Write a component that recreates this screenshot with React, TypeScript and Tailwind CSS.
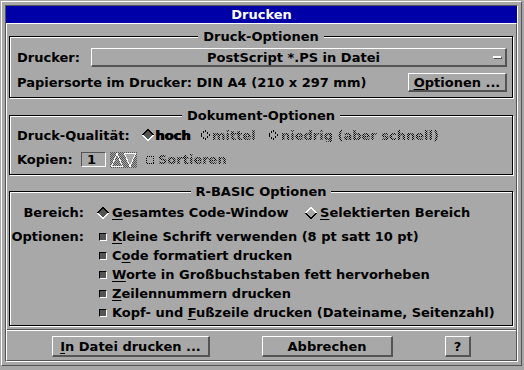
import React from "react";

const DIS =
  "bg-clip-text text-transparent bg-[image:repeating-conic-gradient(#000_0%_25%,transparent_0%_50%)] bg-[length:2px_2px]";

function U({ children }: { children: React.ReactNode }) {
  return <span className="underline decoration-1 underline-offset-[2px]">{children}</span>;
}

function Diamond({ kind }: { kind: "on" | "off" | "dis" }) {
  return (
    <svg width="12" height="12" viewBox="0 0 12 12" shapeRendering="crispEdges" className="shrink-0">
      {kind === "on" && (
        <>
          <polygon points="6,0.5 11.5,6 6,11.5 0.5,6" fill="#545454" />
          <polyline points="0.5,6 6,0.5 11.5,6" fill="none" stroke="#000" />
          <polyline points="0.5,6 6,11.5 11.5,6" fill="none" stroke="#fff" />
        </>
      )}
      {kind === "off" && (
        <>
          <polyline points="0.5,6 6,0.5 11.5,6" fill="none" stroke="#fff" />
          <polyline points="0.5,6 6,11.5 11.5,6" fill="none" stroke="#000" />
        </>
      )}
      {kind === "dis" && (
        <polygon
          points="6,1.5 10.5,6 6,10.5 1.5,6"
          fill="none"
          stroke="#000"
          strokeDasharray="1.4 1.4"
        />
      )}
    </svg>
  );
}

function Check() {
  return (
    <div className="w-[12px] h-[12px] flex items-center justify-center shrink-0">
      <div className="w-[8px] h-[8px] bg-[#545454] border-t border-l border-t-black border-l-black border-b border-r border-b-white border-r-white" />
    </div>
  );
}

function Group({
  title,
  className,
  children,
}: {
  title: string;
  className: string;
  children: React.ReactNode;
}) {
  return (
    <div
      className={
        "relative ml-[2px] mr-[3px] border border-black shadow-[inset_1px_1px_0_#fff,1px_1px_0_#fff] " +
        className
      }
    >
      <div className="absolute left-0 right-0 -top-[8px] flex justify-center">
        <span className="bg-[#a8a8a8] px-[5px] leading-[15px]">{title}</span>
      </div>
      {children}
    </div>
  );
}

const BTN =
  "h-[19px] border-t border-l border-t-white border-l-white border-r-2 border-b-2 border-r-[#545454] border-b-[#545454] flex items-center justify-center";

function OptRow({ label, children }: { label?: string; children: React.ReactNode }) {
  return (
    <div className="h-[19px] flex items-center">
      <div className="w-[74px] text-right">{label}</div>
      <div className="ml-[13px] flex items-center">
        <Check />
        <span className="ml-[3px]">{children}</span>
      </div>
    </div>
  );
}

export default function App() {
  return (
    <div className="w-[524px] h-[370px] bg-[#a8a8a8] pl-[1px] pt-[1px] pr-[2px] pb-[4px] font-['DejaVu_Sans',sans-serif] font-bold text-[13px] leading-none text-black">
      <div className="h-full border border-t-white border-l-white border-r-[#545454] border-b-[#545454] p-[3px]">
        <div className="h-full flex flex-col border border-t-[#545454] border-l-[#545454] border-r-white border-b-white">
          <div className="h-[17px] shrink-0 bg-[#0000a8] text-white flex items-center justify-center">
            Drucken
          </div>
          <div className="flex-1 flex flex-col border border-t-white border-l-white border-r-[#545454] border-b-[#545454] pt-[12px]">
            {/* Druck-Optionen */}
            <Group title="Druck-Optionen" className="h-[62px] pt-[11px] pl-[7px] pr-[5px]">
              <div className="h-[19px] flex items-center">
                <div className="w-[74px]">Drucker:</div>
                <div className="flex-1 h-[19px] border-t border-l border-t-white border-l-white border-r-2 border-b-2 border-r-[#545454] border-b-[#545454] flex items-center">
                  <div className="flex-1 text-center pl-[2px]">PostScript *.PS in Datei</div>
                  <div className="w-[8px] h-[2px] bg-white shadow-[1px_1px_0_#545454] mr-[4px] mb-[1px]" />
                </div>
              </div>
              <div className="mt-[6px] h-[19px] flex items-center">
                <div>Papiersorte im Drucker: DIN A4 (210 x 297 mm)</div>
                <div className="flex-1" />
                <div className={BTN + " w-[99px]"}>
                  <span>
                    <U>O</U>ptionen ...
                  </span>
                </div>
              </div>
            </Group>

            {/* Dokument-Optionen */}
            <Group title="Dokument-Optionen" className="mt-[17px] h-[60px] pt-[10px] pl-[7px]">
              <div className="h-[18px] flex items-center">
                <div className="w-[125px]">Druck-Qualität:</div>
                <div className="w-[57px] flex items-center">
                  <Diamond kind="on" />
                  <span className="ml-[1px] [text-shadow:1px_0_0_#000]">hoch</span>
                </div>
                <div className="w-[68px] flex items-center">
                  <Diamond kind="dis" />
                  <span className={"ml-[1px] " + DIS}>mittel</span>
                </div>
                <div className="flex items-center">
                  <Diamond kind="dis" />
                  <span className={"ml-[2px] " + DIS}>niedrig (aber schnell)</span>
                </div>
              </div>
              <div className="mt-[7px] h-[17px] flex items-center">
                <div className="w-[64px]">Kopien:</div>
                <div className="w-[25px] h-[15px] border border-t-[#545454] border-l-[#545454] border-r-white border-b-white pl-[5px] flex items-center">
                  1
                </div>
                <svg
                  width="27"
                  height="16"
                  viewBox="0 0 27 16"
                  shapeRendering="crispEdges"
                  className="ml-[4px]"
                >
                  <defs>
                    <pattern id="ck" width="2" height="2" patternUnits="userSpaceOnUse">
                      <rect width="2" height="2" fill="#a8a8a8" />
                      <rect width="1" height="1" fill="#545454" />
                      <rect x="1" y="1" width="1" height="1" fill="#545454" />
                    </pattern>
                  </defs>
                  <rect width="27" height="16" fill="url(#ck)" />
                  <polygon points="1.5,14.5 7,1.5 12.5,14.5" fill="none" stroke="#fff" />
                  <polygon points="14.5,1.5 25.5,1.5 20,14.5" fill="#a8a8a8" stroke="#fff" />
                </svg>
                <svg width="8" height="8" viewBox="0 0 8 8" shapeRendering="crispEdges" className="ml-[9px]">
                  <rect x="0.5" y="0.5" width="7" height="7" fill="none" stroke="#000" strokeDasharray="1 1" />
                </svg>
                <span className={"ml-[4px] " + DIS}>Sortieren</span>
              </div>
            </Group>

            {/* R-BASIC Optionen */}
            <Group title="R-BASIC Optionen" className="mt-[16px] h-[135px] pt-[11px]">
              <div className="h-[19px] flex items-center">
                <div className="w-[74px] text-right">Bereich:</div>
                <div className="ml-[13px] w-[208px] flex items-center">
                  <Diamond kind="on" />
                  <span className="ml-[3px]">
                    <U>G</U>esamtes Code-Window
                  </span>
                </div>
                <div className="flex items-center">
                  <Diamond kind="off" />
                  <span className="ml-[3px]">
                    <U>S</U>elektierten Bereich
                  </span>
                </div>
              </div>
              <div className="mt-[5px]">
                <OptRow label="Optionen:">
                  <U>K</U>leine Schrift verwenden (8 pt satt 10 pt)
                </OptRow>
                <OptRow>
                  C<U>o</U>de formatiert drucken
                </OptRow>
                <OptRow>
                  <U>W</U>orte in Großbuchstaben fett hervorheben
                </OptRow>
                <OptRow>
                  <U>Z</U>eilennummern drucken
                </OptRow>
                <OptRow>
                  Kopf- und <U>F</U>ußzeile drucken (Dateiname, Seitenzahl)
                </OptRow>
              </div>
            </Group>

            <div className="mt-[3px] h-[2px] border-t border-t-[#545454] border-b border-b-white" />

            <div className="mt-[5px] h-[21px] flex pl-[45px] gap-[52px]">
              <div className={BTN + " h-[21px] w-[158px]"}>
                <span>
                  <U>I</U>n Datei drucken ...
                </span>
              </div>
              <div className={BTN + " h-[21px] w-[131px]"}>Abbrechen</div>
              <div className={BTN + " h-[21px] w-[26px]"}>?</div>
            </div>
          </div>
        </div>
      </div>
    </div>
  );
}
